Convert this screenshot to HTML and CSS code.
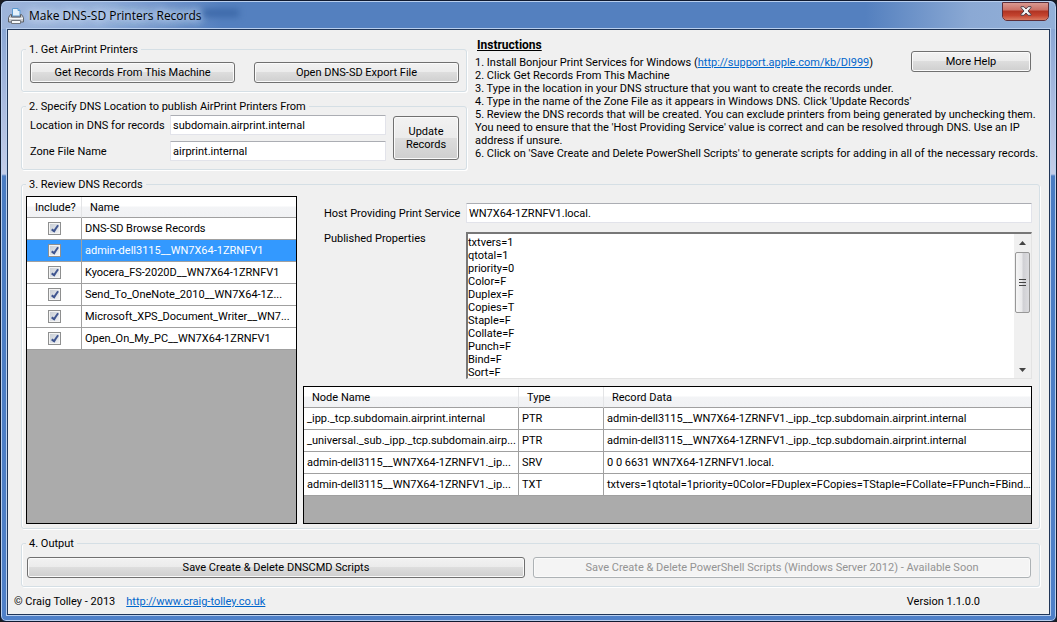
FILE: index.html
```html
<!DOCTYPE html>
<html lang="en">
<head>
    <meta charset="UTF-8">
    <meta name="viewport" content="width=device-width, initial-scale=1.0">
    <title>Make DNS-SD Printers Records</title>
    <link rel="stylesheet" href="styles.css">
</head>
<body>
<div class="window">
    <header class="titlebar">
        <svg class="app-icon" width="16" height="16" viewBox="0 0 16 16">
            <path d="M4.500 8V.5h5.500l2 2V8z" fill="#e4f1fc" stroke="#5d9ad0"/>
            <path d="M10 .5v2h2" fill="none" stroke="#5d9ad0"/>
            <path d="M2.500 6.500h1V9h9V6.500h1l2 3v4.500H.5V9.500z" fill="#c9cbd0" stroke="#5b5f66"/>
            <path d="M1 10.500h14" stroke="#f7f7f7"/>
            <path d="M3.500 12.500h9v3h-9z" fill="#f5f8fb" stroke="#70757d"/>
        </svg>
        <span class="title">Make DNS-SD Printers Records</span>
        <span class="smudge"></span>
        <button class="close" type="button" aria-label="Close">
            <svg width="12" height="10" viewBox="0 0 12 10">
                <path d="M1 .7h3L6 3 8 .7h3v1L8 5l3 3.300v1H8L6 7 4 9.300H1v-1L4 5 1 1.700z" fill="#f4f4f4" stroke="#52404a" stroke-width="1"/>
            </svg>
        </button>
    </header>

    <main class="client">
        <div class="top">
            <div class="setup">
                <fieldset class="get">
                    <legend>1. Get AirPrint Printers</legend>
                    <div class="row">
                        <button class="btn" type="button">Get Records From This Machine</button>
                        <button class="btn" type="button">Open DNS-SD Export File</button>
                    </div>
                </fieldset>
                <fieldset class="location">
                    <legend>2. Specify DNS Location to publish AirPrint Printers From</legend>
                    <div class="location-form">
                        <div class="fields">
                            <label for="location">Location in DNS for records</label>
                            <input class="text" type="text" id="location" value="subdomain.airprint.internal">
                            <label for="zone">Zone File Name</label>
                            <input class="text" type="text" id="zone" value="airprint.internal">
                        </div>
                        <button class="btn update" type="button">Update<br>Records</button>
                    </div>
                </fieldset>
            </div>
            <section class="instructions">
                <button class="btn help" type="button">More Help</button>
                <h2>Instructions</h2>
                <p>1. Install Bonjour Print Services for Windows (<a href="http://support.apple.com/kb/Dl999">http://support.apple.com/kb/Dl999</a>)</p>
                <p>2. Click Get Records From This Machine</p>
                <p>3. Type in the location in your DNS structure that you want to create the records under.</p>
                <p>4. Type in the name of the Zone File as it appears in Windows DNS. Click 'Update Records'</p>
                <p>5. Review the DNS records that will be created. You can exclude printers from being generated by unchecking them.<br>
                You need to ensure that the 'Host Providing Service' value is correct and can be resolved through DNS. Use an IP<br>
                address if unsure.</p>
                <p>6. Click on 'Save Create and Delete PowerShell Scripts' to generate scripts for adding in all of the necessary records.</p>
            </section>
        </div>

        <fieldset class="review">
            <legend>3. Review DNS Records</legend>
            <div class="review-body">
                <div class="grid printers">
                    <table>
                        <colgroup><col class="c-include"><col></colgroup>
                        <thead>
                            <tr><th>Include?</th><th>Name</th></tr>
                        </thead>
                        <tbody>
                            <tr><td class="check"><input type="checkbox" aria-label="Include DNS-SD Browse Records" checked></td><td>DNS-SD Browse Records</td></tr>
                            <tr class="selected"><td class="check"><input type="checkbox" aria-label="Include admin-dell3115" checked></td><td>admin-dell3115__WN7X64-1ZRNFV1</td></tr>
                            <tr><td class="check"><input type="checkbox" aria-label="Include Kyocera_FS-2020D" checked></td><td>Kyocera_FS-2020D__WN7X64-1ZRNFV1</td></tr>
                            <tr><td class="check"><input type="checkbox" aria-label="Include Send_To_OneNote_2010" checked></td><td>Send_To_OneNote_2010__WN7X64-1Z...</td></tr>
                            <tr><td class="check"><input type="checkbox" aria-label="Include Microsoft_XPS_Document_Writer" checked></td><td>Microsoft_XPS_Document_Writer__WN7...</td></tr>
                            <tr><td class="check"><input type="checkbox" aria-label="Include Open_On_My_PC" checked></td><td>Open_On_My_PC__WN7X64-1ZRNFV1</td></tr>
                        </tbody>
                    </table>
                </div>
                <div class="details">
                    <div class="detail-form">
                        <label for="host">Host Providing Print Service</label>
                        <input class="text" type="text" id="host" value="WN7X64-1ZRNFV1.local.">
                        <label for="props" class="props-label">Published Properties</label>
                        <div class="props">
                            <textarea id="props">txtvers=1
qtotal=1
priority=0
Color=F
Duplex=F
Copies=T
Staple=F
Collate=F
Punch=F
Bind=F
Sort=F</textarea>
                            <div class="scrollbar">
                                <svg width="7" height="4" viewBox="0 0 7 4"><path d="M0 4 3.500 0 7 4z" fill="#444"/></svg>
                                <div class="thumb"><i></i><i></i><i></i></div>
                                <svg class="down" width="7" height="4" viewBox="0 0 7 4"><path d="M0 0h7L3.500 4z" fill="#444"/></svg>
                            </div>
                        </div>
                    </div>
                    <div class="grid records">
                        <table>
                            <colgroup><col class="c-node"><col class="c-type"><col></colgroup>
                            <thead>
                                <tr><th>Node Name</th><th>Type</th><th>Record Data</th></tr>
                            </thead>
                            <tbody>
                                <tr><td>_ipp._tcp.subdomain.airprint.internal</td><td>PTR</td><td>admin-dell3115__WN7X64-1ZRNFV1._ipp._tcp.subdomain.airprint.internal</td></tr>
                                <tr><td>_universal._sub._ipp._tcp.subdomain.airp...</td><td>PTR</td><td>admin-dell3115__WN7X64-1ZRNFV1._ipp._tcp.subdomain.airprint.internal</td></tr>
                                <tr><td>admin-dell3115__WN7X64-1ZRNFV1._ip...</td><td>SRV</td><td>0 0 6631 WN7X64-1ZRNFV1.local.</td></tr>
                                <tr><td>admin-dell3115__WN7X64-1ZRNFV1._ip...</td><td>TXT</td><td>txtvers=1qtotal=1priority=0Color=FDuplex=FCopies=TStaple=FCollate=FPunch=FBind=...</td></tr>
                            </tbody>
                        </table>
                    </div>
                </div>
            </div>
        </fieldset>

        <fieldset class="output">
            <legend>4. Output</legend>
            <div class="row">
                <button class="btn" type="button">Save Create &amp; Delete DNSCMD Scripts</button>
                <button class="btn" type="button" disabled>Save Create &amp; Delete PowerShell Scripts (Windows Server 2012) - Available Soon</button>
            </div>
        </fieldset>

        <footer class="footer">
            <span>© Craig Tolley - 2013</span>
            <a href="http://www.craig-tolley.co.uk">http://www.craig-tolley.co.uk</a>
            <span class="version">Version 1.1.0.0</span>
        </footer>
    </main>
</div>
</body>
</html>
```
FILE: styles.css
```css
* {
    box-sizing: border-box;
}

body {
    margin: 0;
    background: #1a1c22;
    color: #000;
    font: 11px/13px Roboto, "Liberation Sans", Arial, sans-serif;
}

button, input, textarea {
    font: inherit;
    color: inherit;
}

a {
    color: #0066cc;
}

/* window frame */
.window {
    display: flex;
    flex-direction: column;
    min-height: 100vh;
    padding: 0 6px 6px;
    border: 1px solid #101a30;
    border-radius: 7px 7px 6px 6px;
    background: linear-gradient(#7e9fd0 0, #a9bbdf 100px, #c3cde8 173px, #4a7cc2 175px, #4f80c8 100%);
    box-shadow: inset 0 0 0 1px #b9cfee;
}

.titlebar {
    display: flex;
    align-items: center;
    height: 28px;
    margin: 0 -5px;
    padding: 0 6px;
    border-top: 1px solid #b9cfee;
    border-radius: 6px 6px 0 0;
    background: linear-gradient(90deg, #9db4da 0, #8facd8 100px, #5480bf 220px, #5480bf 82%, #8ba9d4 92%, #93b0d8 100%);
}

.title {
    margin-left: 5px;
    font: 12px/16px "Open Sans", "Noto Sans", sans-serif;
    text-shadow: 0 0 8px #d5e2f5, 0 0 8px #d5e2f5, 0 0 12px #d5e2f5;
}

.smudge {
    width: 36px;
    height: 8px;
    margin: -6px 0 0 1px;
    background: #3d69a9;
    filter: blur(3px);
}

.close {
    display: flex;
    align-items: center;
    justify-content: center;
    align-self: flex-start;
    width: 47px;
    height: 19px;
    margin-left: auto;
    padding: 0;
    border: 1px solid #e8c9cc;
    border-top: 0;
    border-radius: 0 0 5px 5px;
    outline: 1px solid #5c2e3a;
    outline-offset: -1px;
    background: linear-gradient(#dc9f98 0, #cb6f64 45%, #b03322 50%, #c4442f 75%, #d97b62 100%);
}

.client {
    display: flex;
    flex: 1;
    flex-direction: column;
    gap: 8px;
    padding: 13px 9px 6px 13px;
    border: 1px solid #1f3557;
    outline: 1px solid #b9cfee;
    background: #f0f0f0;
}

/* group boxes */
fieldset {
    min-width: 0;
    margin: 0;
    border: 1px solid #d5dfe5;
    border-radius: 3px;
    box-shadow: inset 1px 0 0 #fff, 1px 1px 0 #fff;
}

legend {
    margin-left: -4px;
    padding: 0 3px;
}

.get {
    padding: 6px 7px 8px 8px;
}

.location {
    padding: 2px 7px 8px 8px;
}

.review {
    flex: 1;
    padding: 5px 7px 4px 4px;
}

.review legend {
    margin-left: 0;
}

.output {
    padding: 7px 8px 8px 5px;
}

.output legend {
    margin-left: -1px;
}

.row {
    display: flex;
    gap: 19px;
}

.output .row {
    gap: 8px;
}

.row .btn {
    flex: 1 1 0;
}

/* controls */
.btn {
    height: 21px;
    padding: 0 4px;
    border: 1px solid #707070;
    border-radius: 3px;
    background: linear-gradient(#f2f2f2 0, #ebebeb 49%, #dddddd 50%, #cfcfcf 100%);
    box-shadow: inset 0 0 0 1px #fafafa;
}

.btn:disabled {
    border-color: #adb2b5;
    background: #f4f4f4;
    color: #939393;
}

.text {
    width: 100%;
    min-width: 0;
    height: 20px;
    padding: 0 2px;
    border: 1px solid #e2e3ea;
    border-top-color: #abadb3;
    border-radius: 1px;
    background: #fff;
}

.top {
    display: flex;
    gap: 8px;
}

.setup {
    display: flex;
    flex: 0 0 446px;
    flex-direction: column;
    gap: 8px;
}

.location-form {
    display: flex;
    align-items: center;
    gap: 7px;
}

.fields {
    display: grid;
    flex: 1;
    grid-template-columns: 140px 1fr;
    row-gap: 6px;
    align-items: center;
}

.update {
    width: 66px;
    height: 44px;
}

.instructions {
    flex: 1;
    min-width: 0;
    margin-top: -4px;
}

.instructions h2 {
    margin: 0 0 4px 2px;
    font-size: 12px;
    line-height: 13px;
    text-decoration: underline;
}

.instructions p {
    margin: 0;
}

.help {
    float: right;
    width: 120px;
    margin: 12px 9px 0 0;
}

/* record grids */
.review-body {
    display: flex;
    gap: 6px;
}

.grid {
    border: 1px solid #000;
    background: #ababab;
}

.printers {
    flex: 0 0 271px;
}

.records {
    min-height: 138px;
}

table {
    width: 100%;
    table-layout: fixed;
    border-collapse: separate;
    border-spacing: 0;
}

.c-include {
    width: 55px;
}

.c-node {
    width: 215px;
}

.c-type {
    width: 85px;
}

th, td {
    overflow: hidden;
    padding: 0 0 0 3px;
    border-right: 1px solid #a0a0a0;
    border-bottom: 1px solid #a0a0a0;
    text-align: left;
    text-overflow: ellipsis;
    white-space: nowrap;
}

th {
    height: 21px;
    padding-left: 8px;
    border-right-color: #e3e4e6;
    background: linear-gradient(#fff 0, #fff 45%, #f3f4f6 50%, #f1f2f4 100%);
    font-weight: normal;
}

td {
    height: 22px;
    background: #fff;
}

th:last-child, td:last-child {
    border-right: 0;
}

.selected td {
    background: #3399ff;
    color: #fff;
}

.check {
    padding: 0;
}

.check input {
    display: block;
    width: 13px;
    height: 13px;
    margin: 0 auto;
    appearance: none;
    border: 1px solid #8e8f8f;
    outline: 1px solid #f4f4f4;
    outline-offset: -2px;
    background: linear-gradient(135deg, #c4cad2, #f4f5f7);
}

.check input:checked::before {
    content: "";
    display: block;
    width: 2px;
    height: 6px;
    margin: 1px 0 0 4px;
    border: solid #3f5590;
    border-width: 0 2px 2px 0;
    transform: rotate(35deg);
}

/* selected record */
.details {
    display: flex;
    flex: 1;
    flex-direction: column;
    gap: 7px;
    min-width: 0;
    padding-top: 7px;
}

.detail-form {
    display: grid;
    grid-template-columns: 142px 1fr;
    row-gap: 9px;
    align-items: center;
    padding-left: 21px;
}

.props-label {
    align-self: start;
}

.props {
    display: flex;
    height: 147px;
    border: 1px solid #e3e3e3;
    border-top: 2px solid #777;
    border-left: 2px solid #777;
    background: #fff;
}

.props textarea {
    flex: 1;
    padding: 2px 0 0;
    border: 0;
    background: none;
    overflow: hidden;
    resize: none;
}

.scrollbar {
    display: flex;
    flex-direction: column;
    align-items: center;
    width: 17px;
    padding: 7px 0 6px;
    background: #f0f0f0;
}

.thumb {
    display: flex;
    flex-direction: column;
    align-items: center;
    justify-content: center;
    gap: 2px;
    width: 15px;
    height: 61px;
    margin-top: 7px;
    border: 1px solid #979797;
    border-radius: 2px;
    background: linear-gradient(90deg, #f5f5f5 0, #e9e9eb 45%, #d0d0d4 55%, #dcdcdf 100%);
}

.thumb i {
    width: 7px;
    height: 1px;
    background: #444;
}

.down {
    margin-top: auto;
}

.footer {
    display: flex;
    gap: 11px;
    margin-left: -7px;
}

.version {
    margin-left: auto;
    padding-right: 60px;
}
```
